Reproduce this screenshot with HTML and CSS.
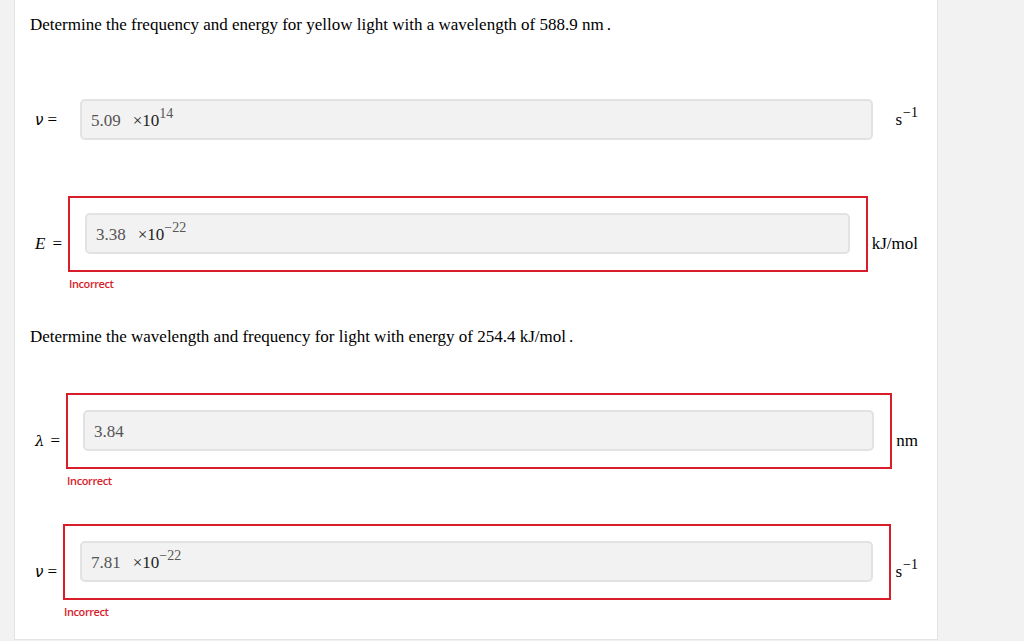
FILE: index.html
```html
<!DOCTYPE html>
<html lang="en">
<head>
<meta charset="utf-8">
<title>Frequency and energy</title>
<link rel="stylesheet" href="styles.css">
</head>
<body>
<div class="panel">
  <p class="question q-first">Determine the frequency and energy for yellow light with a wavelength of 588.9 nm<span class="dot">.</span></p>

  <div class="row row-1">
    <div class="label"><i class="sym nu">ν</i><span class="eq">=</span></div>
    <div class="cell">
      <div class="box plain">
        <div class="field"><span class="val">5.09</span><span class="exp">×10<sup>14</sup></span></div>
      </div>
    </div>
    <div class="unit">s<sup>−1</sup></div>
  </div>

  <div class="row row-2">
    <div class="label"><i class="sym">E</i><span class="eq">=</span></div>
    <div class="cell">
      <div class="box wrong">
        <div class="field"><span class="val">3.38</span><span class="exp">×10<sup>−22</sup></span></div>
      </div>
      <div class="msg">Incorrect</div>
    </div>
    <div class="unit">kJ/mol</div>
  </div>

  <p class="question q-second">Determine the wavelength and frequency for light with energy of 254.4 kJ/mol<span class="dot">.</span></p>

  <div class="row row-3">
    <div class="label"><i class="sym lam">λ</i><span class="eq">=</span></div>
    <div class="cell">
      <div class="box wrong">
        <div class="field"><span class="val">3.84</span></div>
      </div>
      <div class="msg">Incorrect</div>
    </div>
    <div class="unit">nm</div>
  </div>

  <div class="row row-4">
    <div class="label"><i class="sym nu">ν</i><span class="eq">=</span></div>
    <div class="cell">
      <div class="box wrong">
        <div class="field"><span class="val">7.81</span><span class="exp">×10<sup>−22</sup></span></div>
      </div>
      <div class="msg">Incorrect</div>
    </div>
    <div class="unit">s<sup>−1</sup></div>
  </div>
</div>
</body>
</html>
```

FILE: styles.css
```css
html, body {
  margin: 0;
  padding: 0;
}

body {
  background: #f2f2f2;
  font-family: "Liberation Serif", "Times New Roman", serif;
  font-size: 17px;
  color: #000;
}

.panel {
  box-sizing: border-box;
  width: 924px;
  height: 640px;
  margin-left: 14px;
  background: #fff;
  border-left: 1px solid #e3e3e3;
  border-right: 1px solid #e3e3e3;
  border-bottom: 1px solid #e3e3e3;
  padding: 15px 19px 0 15px;
}

.question {
  margin: 0;
  line-height: 20px;
}

.dot {
  margin-left: 3px;
}

.q-second {
  margin-top: 35px;
}

.row {
  display: flex;
  align-items: center;
}

.row-1 { margin-top: 47px; }
.row-2 { margin-top: 38px; }
.row-3 { margin-top: 46px; }
.row-4 { margin-top: 35px; }

.label {
  padding-left: 5px;
  margin-right: 6px;
  white-space: nowrap;
  line-height: 20px;
}

.sym {
  font-style: italic;
}

.nu {
  font-family: "DejaVu Sans", sans-serif;
  font-size: 15px;
  font-style: italic;
}

.lam {
  font-family: "DejaVu Serif", serif;
  font-size: 15px;
}

.eq {
  margin-left: 7px;
}

.nu + .eq {
  margin-left: 4px;
}

.lam + .eq {
  margin-left: 6px;
}

.cell {
  flex: 1;
  align-self: flex-start;
}

.box {
  border: 2px solid transparent;
  padding: 15px 16px 16px 15px;
}

.box.wrong {
  border-color: #d81e2b;
}

.field {
  box-sizing: border-box;
  height: 41px;
  background: #f2f2f2;
  border: 2px solid #e2e2e2;
  border-radius: 5px;
  padding: 2px 9px 0;
  display: flex;
  align-items: center;
  line-height: 20px;
  color: #555;
}

.exp {
  margin-left: 12px;
  color: #222;
}

.exp sup {
  font-size: 14px;
  vertical-align: 8px;
  line-height: 0;
  color: #555;
}

.msg {
  margin-top: 4px;
  margin-left: 1px;
  font-family: "Open Sans", "Liberation Sans", sans-serif;
  font-weight: 600;
  font-size: 11px;
  letter-spacing: -0.4px;
  line-height: 16px;
  color: #d81e2b;
}

.unit {
  margin-left: 4px;
  white-space: nowrap;
  line-height: 20px;
}

.unit sup {
  font-size: 14px;
  vertical-align: 8px;
  line-height: 0;
  margin-left: 1px;
}
```
